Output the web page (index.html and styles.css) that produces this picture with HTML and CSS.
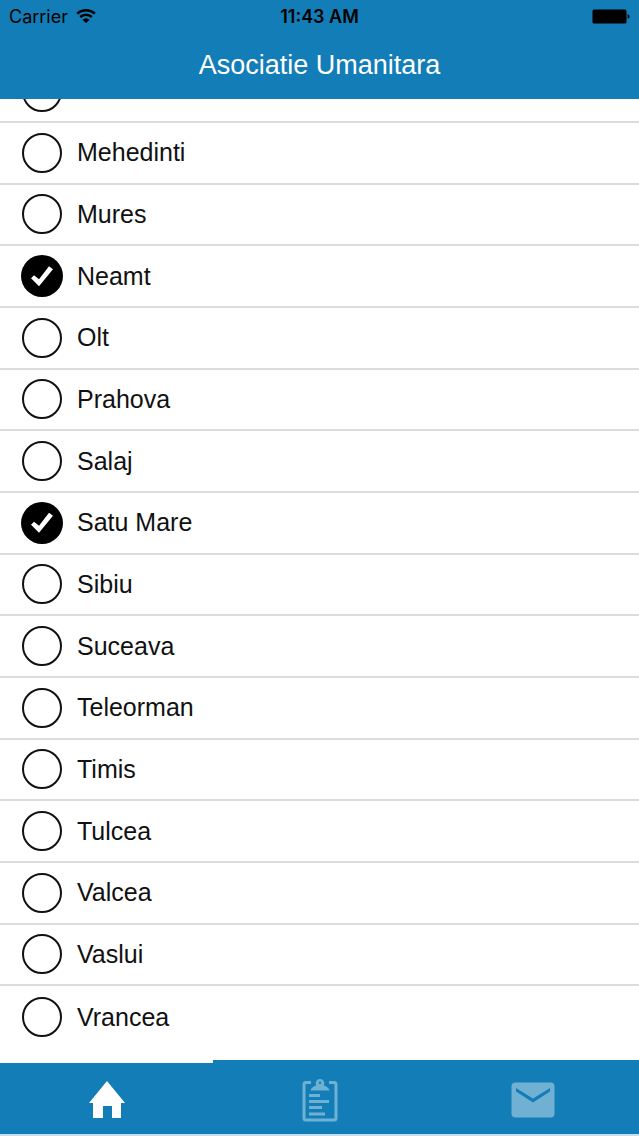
FILE: index.html
```html
<!DOCTYPE html>
<html lang="ro">
<head>
  <meta charset="UTF-8" />
  <meta name="viewport" content="width=device-width, initial-scale=1" />
  <title>Asociatie Umanitara</title>
  <link rel="stylesheet" href="styles.css">
</head>
<body>

  <header>
    <div class="status-bar">
      <div class="carrier">
        <span>Carrier</span>
        <svg class="wifi" viewBox="0 0 20 14" aria-hidden="true">
          <path d="M1.2 4.7a13 13 0 0 1 17.6 0M4.2 8a8.6 8.6 0 0 1 11.6 0" fill="none" stroke="#000" stroke-width="2.4" />
          <path d="M6.4 10.8a5.4 5.4 0 0 1 7.2 0L10 13.9z" fill="#000" />
        </svg>
      </div>
      <time class="clock">11:43 AM</time>
      <div class="battery-wrap">
        <svg class="battery" viewBox="0 0 38 15" aria-hidden="true">
          <rect x="0.5" y="0.5" width="34" height="14" rx="1.5" />
          <path d="M35.6 5.2q2 .6 2 2.3t-2 2.3z" />
        </svg>
      </div>
    </div>
    <h1>Asociatie Umanitara</h1>
  </header>

  <main>
    <ul class="judete">
      <li class="scrolled"><label><input type="checkbox" name="judet" aria-label="Maramures" /></label></li>
      <li><label><input type="checkbox" name="judet" />Mehedinti</label></li>
      <li><label><input type="checkbox" name="judet" />Mures</label></li>
      <li><label><input type="checkbox" name="judet" checked />Neamt</label></li>
      <li><label><input type="checkbox" name="judet" />Olt</label></li>
      <li><label><input type="checkbox" name="judet" />Prahova</label></li>
      <li><label><input type="checkbox" name="judet" />Salaj</label></li>
      <li><label><input type="checkbox" name="judet" checked />Satu Mare</label></li>
      <li><label><input type="checkbox" name="judet" />Sibiu</label></li>
      <li><label><input type="checkbox" name="judet" />Suceava</label></li>
      <li><label><input type="checkbox" name="judet" />Teleorman</label></li>
      <li><label><input type="checkbox" name="judet" />Timis</label></li>
      <li><label><input type="checkbox" name="judet" />Tulcea</label></li>
      <li><label><input type="checkbox" name="judet" />Valcea</label></li>
      <li><label><input type="checkbox" name="judet" />Vaslui</label></li>
      <li><label><input type="checkbox" name="judet" />Vrancea</label></li>
    </ul>
  </main>

  <nav>
    <a href="#acasa" class="active" aria-label="Acasa">
      <svg width="36" height="38" viewBox="0 0 36 38">
        <path d="M18 0 36 22H32V37H23V25H14V37H4V22H0z" fill="currentColor" />
      </svg>
    </a>
    <a href="#formular" aria-label="Formular">
      <svg width="36" height="44" viewBox="0 0 36 44">
        <path d="M9 4.5H4Q2 4.5 2 6.5V40Q2 42 4 42H32Q34 42 34 40V6.5Q34 4.5 32 4.5H27" fill="none" stroke="currentColor" stroke-width="3" />
        <path fill-rule="evenodd" d="M8.5 12.5Q9 9.5 14 7.6A4.5 4.5 0 1 1 22 7.6Q27 9.5 27.5 12.5zM18 3.6a1.2 1.2 0 1 0 0 2.4a1.2 1.2 0 0 0 0-2.4z" fill="currentColor" />
        <path d="M7 17.5H18M7 23.5H27M7 29.5H20M7 36H23" stroke="currentColor" stroke-width="3" />
      </svg>
    </a>
    <a href="#mesaje" aria-label="Mesaje">
      <svg width="44" height="36" viewBox="0 0 44 36">
        <rect x="0.5" y="0.5" width="43" height="35" rx="4" fill="currentColor" />
        <path d="M5 6 22 16.5 39 6V9.5L22 20.5 5 9.5z" fill="#127db6" />
      </svg>
    </a>
  </nav>

</body>
</html>
```

FILE: styles.css
```css
* {
  box-sizing: border-box;
}
body {
  font-family: "Liberation Sans", Arial, sans-serif;
  margin: 0;
  display: flex;
  flex-direction: column;
  min-height: 100vh;
  background: #fff;
  color: #111;
}

/* bara de sus */
header {
  background-color: #127db6;
  padding-bottom: 17px;
}
.status-bar {
  display: grid;
  grid-template-columns: 1fr auto 1fr;
  align-items: center;
  height: 32px;
  padding: 0 9px;
  font-family: Inter, sans-serif;
  font-size: 18px;
  color: #000;
}
.carrier {
  display: flex;
  align-items: center;
  gap: 8px;
}
.wifi {
  width: 20px;
  height: 14px;
}
.clock {
  font-weight: 600;
}
.battery-wrap {
  display: flex;
  justify-content: flex-end;
}
.battery {
  width: 38px;
  height: 15px;
}
h1 {
  margin: 0;
  padding-top: 16px;
  color: #fff;
  font-size: 27px;
  font-weight: normal;
  line-height: 34px;
  text-align: center;
}

/* lista de judete */
main {
  flex: 1;
  display: flex;
  padding-bottom: 12px;
}
.judete {
  flex: 1;
  display: grid;
  grid-template-rows: 24px repeat(15, 1fr);
  list-style: none;
  margin: 0;
  padding: 0;
}
.judete li {
  display: flex;
  border-bottom: 2px solid #dcdce0;
}
.judete li:last-child {
  border-bottom: none;
}
.judete li.scrolled {
  align-items: flex-end;
  overflow: hidden;
}
.judete label {
  flex: 1;
  display: flex;
  align-items: center;
  gap: 15px;
  min-height: 58px;
  padding: 0 22px;
  font-size: 25px;
  cursor: pointer;
}
input[type="checkbox"] {
  appearance: none;
  width: 40px;
  height: 40px;
  margin: 0;
  border: 2px solid #111;
  border-radius: 50%;
}
input[type="checkbox"]:checked {
  background-color: #000;
  border-color: #000;
  box-shadow: 0 0 0 1px #000;
}
input[type="checkbox"]:checked::before {
  content: "";
  display: block;
  width: 36px;
  height: 36px;
  background-color: #fff;
  clip-path: polygon(7px 20px, 10px 17px, 15px 21px, 25px 8px, 29px 11px, 15px 28px);
}

/* meniul de jos */
nav {
  display: grid;
  grid-template-columns: repeat(3, 1fr);
  height: 76px;
  background-color: #127db6;
  border-bottom: 2px solid #c4dfed;
}
nav a {
  display: flex;
  align-items: center;
  justify-content: center;
  padding-top: 3px;
  border-top: 3px solid transparent;
  color: #70b1d3;
}
nav a.active {
  border-top-color: #fff;
  color: #fff;
}
```
